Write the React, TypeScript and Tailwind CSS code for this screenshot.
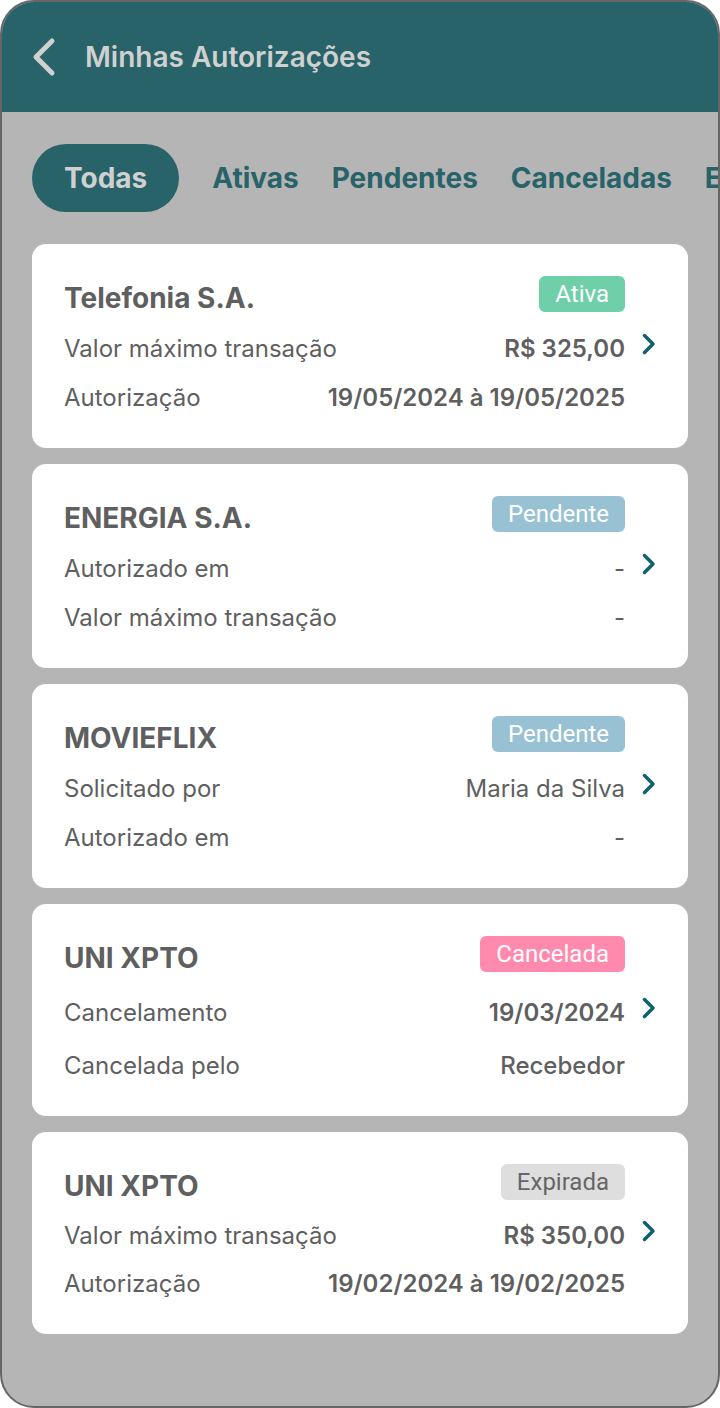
type Status = "Ativa" | "Pendente" | "Cancelada" | "Expirada";

type Row = { label: string; value: string; weight: "normal" | "medium" | "semibold" };

type Auth = {
  name: string;
  status: Status;
  rows: Row[];
  gap: string;
};

const badgeStyles: Record<Status, string> = {
  Ativa: "bg-[#6fcfa9] text-white",
  Pendente: "bg-[#98c2d4] text-white",
  Cancelada: "bg-[#ff8aae] text-white",
  Expirada: "bg-[#dedede] text-[#666666]",
};

const weightClass = {
  normal: "font-normal",
  medium: "font-medium",
  semibold: "font-semibold",
};

const tabs = ["Todas", "Ativas", "Pendentes", "Canceladas", "Expiradas"];

const auths: Auth[] = [
  {
    name: "Telefonia S.A.",
    status: "Ativa",
    gap: "mt-[21px]",
    rows: [
      { label: "Valor máximo transação", value: "R$ 325,00", weight: "semibold" },
      { label: "Autorização", value: "19/05/2024 à 19/05/2025", weight: "semibold" },
    ],
  },
  {
    name: "ENERGIA S.A.",
    status: "Pendente",
    gap: "mt-[21px]",
    rows: [
      { label: "Autorizado em", value: "-", weight: "normal" },
      { label: "Valor máximo transação", value: "-", weight: "normal" },
    ],
  },
  {
    name: "MOVIEFLIX",
    status: "Pendente",
    gap: "mt-[21px]",
    rows: [
      { label: "Solicitado por", value: "Maria da Silva", weight: "normal" },
      { label: "Autorizado em", value: "-", weight: "normal" },
    ],
  },
  {
    name: "UNI XPTO",
    status: "Cancelada",
    gap: "mt-[25px]",
    rows: [
      { label: "Cancelamento", value: "19/03/2024", weight: "semibold" },
      { label: "Cancelada pelo", value: "Recebedor", weight: "medium" },
    ],
  },
  {
    name: "UNI XPTO",
    status: "Expirada",
    gap: "mt-[20px]",
    rows: [
      { label: "Valor máximo transação", value: "R$ 350,00", weight: "semibold" },
      { label: "Autorização", value: "19/02/2024 à 19/02/2025", weight: "semibold" },
    ],
  },
];

function AuthCard({ auth }: { auth: Auth }) {
  return (
    <div className="flex items-center rounded-[14px] bg-white pl-8 pr-8 pt-8 pb-9">
      <div className="flex-1">
        {/* nome + status */}
        <div className="flex items-start justify-between">
          <h2 className="mt-[6px] text-[28px] font-bold leading-8 text-[#5f5f5f]">
            {auth.name}
          </h2>
          <span
            className={`flex h-9 items-center rounded-md px-4 text-[24px] leading-none ${badgeStyles[auth.status]}`}
            style={{ fontFamily: "Roboto, sans-serif" }}
          >
            {auth.status}
          </span>
        </div>

        {auth.rows.map((row) => (
          <div
            key={row.label}
            className={`flex justify-between text-[24px] leading-[28px] text-[#5f5f5f] ${auth.gap}`}
          >
            <span>{row.label}</span>
            <span className={weightClass[row.weight]}>{row.value}</span>
          </div>
        ))}
      </div>

      <div className="flex w-[31px] justify-end">
        <svg width="14" height="22" viewBox="0 0 14 22" fill="none">
          <polyline
            points="2.5,2.5 11,11 2.5,19.5"
            stroke="#11606f"
            strokeWidth="3.5"
            strokeLinecap="round"
            strokeLinejoin="round"
          />
        </svg>
      </div>
    </div>
  );
}

export default function App() {
  return (
    <div
      className="h-[1408px] w-[720px] overflow-hidden rounded-[34px] border-2 border-[#666666] bg-[#b5b5b5]"
      style={{ fontFamily: "Inter, 'Noto Sans', sans-serif" }}
    >
      {/* Header */}
      <header className="flex h-[110px] items-center bg-[#276369] pl-[28px]">
        <svg width="28" height="40" viewBox="0 0 28 40" fill="none">
          <polyline
            points="22,4 6,20 22,36"
            stroke="#d0d0d0"
            strokeWidth="5"
            strokeLinecap="round"
            strokeLinejoin="round"
          />
        </svg>
        <h1 className="ml-[27px] text-[28px] font-semibold text-[#d0d0d0]">
          Minhas Autorizações
        </h1>
      </header>

      {/* Tabs */}
      <nav className="mt-[32px] flex items-center gap-[33px] whitespace-nowrap pl-[30px]">
        {tabs.map((tab, i) =>
          i === 0 ? (
            <span
              key={tab}
              className="flex h-[68px] items-center rounded-full bg-[#276369] px-8 text-[28px] font-bold text-[#d0d0d0]"
            >
              {tab}
            </span>
          ) : (
            <span key={tab} className="text-[28px] font-bold text-[#276369]">
              {tab}
            </span>
          )
        )}
      </nav>

      {/* Lista */}
      <div className="mt-[32px] flex flex-col gap-4 px-[30px]">
        {auths.map((auth, i) => (
          <AuthCard key={i} auth={auth} />
        ))}
      </div>
    </div>
  );
}
